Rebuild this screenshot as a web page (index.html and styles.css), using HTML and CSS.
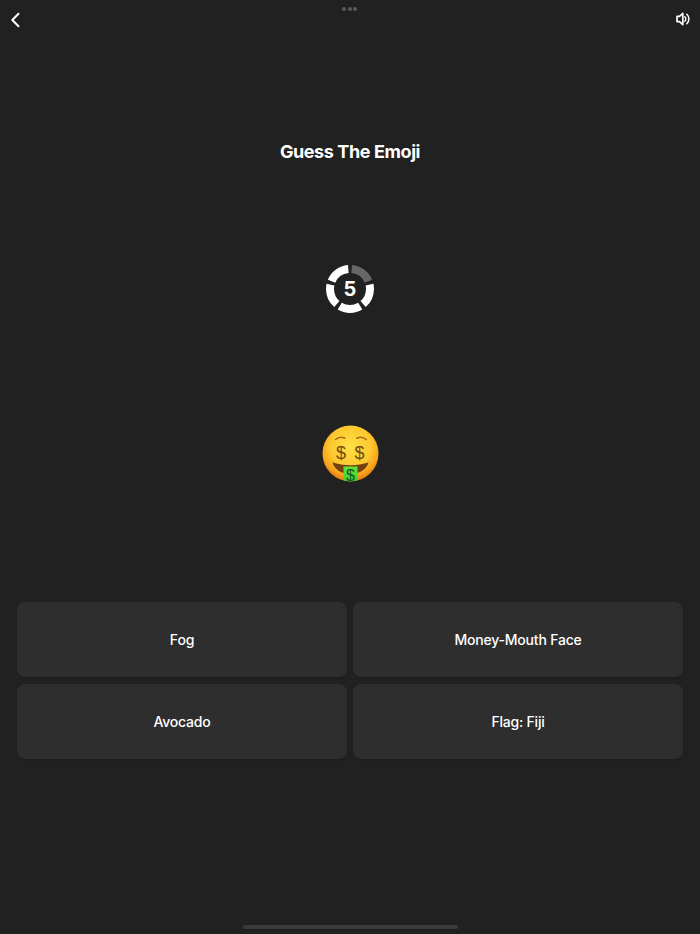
FILE: index.html
```html
<!DOCTYPE html>
<html lang="en">
<head>
<meta charset="utf-8">
<title>Guess The Emoji</title>
<link rel="stylesheet" href="styles.css">
</head>
<body>
<main class="screen">
  <header class="topbar">
    <svg class="icon" width="14" height="16" viewBox="0 0 14 16"><path class="chevron" d="M9.500 1.700 3.300 8l6.200 6.300"/></svg>
    <div class="dots"><span></span><span></span><span></span></div>
    <svg class="icon" width="14" height="14" viewBox="0 0 14 14">
      <path class="speaker" d="M6.800 1.400v11.200L3.500 9.600H1V4.400h2.500z"/>
      <path class="wave" d="M8.800 4.700a3.200 3.200 0 0 1 0 4.600"/>
      <path class="wave" d="M10.800 2.300a6.300 6.300 0 0 1 0 9.400"/>
    </svg>
  </header>
  <h1 class="title">Guess The Emoji</h1>
  <div class="timer">
    <svg class="ring" width="48" height="48" viewBox="0 0 48 48">
      <g class="ring-group">
        <circle class="seg seg-spent" cx="24" cy="24" r="20" pathLength="100" stroke-dasharray="17.200 82.800" stroke-dashoffset="-1.400"/>
        <circle class="seg" cx="24" cy="24" r="20" pathLength="100" stroke-dasharray="17.200 82.800" stroke-dashoffset="-21.400"/>
        <circle class="seg" cx="24" cy="24" r="20" pathLength="100" stroke-dasharray="17.200 82.800" stroke-dashoffset="-41.400"/>
        <circle class="seg" cx="24" cy="24" r="20" pathLength="100" stroke-dasharray="17.200 82.800" stroke-dashoffset="-61.400"/>
        <circle class="seg" cx="24" cy="24" r="20" pathLength="100" stroke-dasharray="17.200 82.800" stroke-dashoffset="-81.400"/>
      </g>
    </svg>
    <span class="count">5</span>
  </div>
  <svg class="emoji" width="80" height="80" viewBox="0 0 80 80" role="img" aria-label="Money-mouth face">
    <defs>
      <radialGradient id="face" cx="50%" cy="38%" r="58%">
        <stop offset="0" stop-color="#ffdf45"/>
        <stop offset=".62" stop-color="#fdc92f"/>
        <stop offset=".88" stop-color="#f7a51d"/>
        <stop offset="1" stop-color="#ea8713"/>
      </radialGradient>
      <linearGradient id="bill" x1="0" y1="0" x2="0" y2="1">
        <stop offset="0" stop-color="#5fe43a"/>
        <stop offset="1" stop-color="#3ccf2c"/>
      </linearGradient>
      <clipPath id="faceclip"><circle cx="40.500" cy="38.500" r="28"/></clipPath>
    </defs>
    <circle cx="40.500" cy="38.500" r="28" fill="url(#face)"/>
    <path class="brow" d="M25.500 24.500c2.800-2.400 6.300-2.900 9.400-1.300"/>
    <path class="brow" d="M46.800 23.200c3.100-1.600 6.600-1.100 9.400 1.300"/>
    <text class="eye" x="31" y="43.500">$</text>
    <text class="eye" x="49.500" y="43.500">$</text>
    <path class="mouth" d="M22.500 47.600c5.400 1.700 11.500 2.600 18 2.600s12.600-.9 18-2.600c-1.400 6-8.200 11.400-18 11.400s-16.600-5.400-18-11.400z"/>
    <g clip-path="url(#faceclip)">
      <rect x="33.500" y="51.500" width="14" height="17" fill="url(#bill)"/>
      <text class="bill-sign" x="40.500" y="65.500">$</text>
    </g>
  </svg>
  <section class="answers">
    <button class="answer">Fog</button>
    <button class="answer">Money-Mouth Face</button>
    <button class="answer">Avocado</button>
    <button class="answer">Flag: Fiji</button>
  </section>
  <div class="home-indicator"></div>
</main>
</body>
</html>
```
FILE: styles.css
```css
* { box-sizing: border-box; }
html, body { margin: 0; height: 100%; }
body {
  background: #212121;
  color: #fff;
  font-family: Inter, "Liberation Sans", sans-serif;
  overflow: hidden;
}
.screen {
  height: 934px;
  display: flex;
  flex-direction: column;
  align-items: center;
}
.topbar {
  width: 100%;
  height: 38px;
  padding: 12px 10px 0 9px;
  display: flex;
  justify-content: space-between;
  align-items: flex-start;
}
.icon { display: block; }
.chevron, .wave {
  fill: none;
  stroke: #fff;
  stroke-linecap: round;
  stroke-linejoin: round;
}
.chevron { stroke-width: 2; }
.wave { stroke-width: 1.500; }
.speaker { fill: none; stroke: #fff; stroke-width: 1.700; stroke-linejoin: round; }
.dots {
  display: flex;
  gap: 1.500px;
  margin-top: -5px;
}
.dots span {
  width: 4px;
  height: 4px;
  border-radius: 50%;
  background: #5a5a5a;
}
.title {
  margin: 100px 0 0;
  height: 28px;
  font-size: 18px;
  line-height: 28px;
  font-weight: 700;
  letter-spacing: -.4px;
}
.timer {
  margin-top: 99px;
  width: 48px;
  height: 48px;
  display: grid;
  place-items: center;
}
.ring, .count { grid-area: 1 / 1; }
.ring-group { transform: rotate(-90deg); transform-origin: 24px 24px; }
.seg { fill: none; stroke: #fff; stroke-width: 8; }
.seg-spent { stroke: #666; }
.count { font-size: 20px; line-height: 1; font-weight: 700; }
.emoji { margin-top: 102px; display: block; flex: none; }
.brow { fill: none; stroke: #a8691a; stroke-width: 1.600; stroke-linecap: round; }
.eye {
  font-family: "Liberation Sans", sans-serif;
  font-size: 18px;
  text-anchor: middle;
  fill: #6f4a16;
}
.mouth { fill: #73400f; }
.bill-sign {
  font-family: "Liberation Sans", sans-serif;
  font-size: 16px;
  text-anchor: middle;
  fill: #14552a;
}
.answers {
  margin-top: 107px;
  width: 100%;
  padding: 0 17px;
  display: grid;
  grid-template-columns: 1fr 1fr;
  grid-auto-rows: 75px;
  gap: 7px 6px;
}
.answer {
  border: 0;
  border-radius: 8px;
  background: #2e2e2e;
  box-shadow: 0 1px 2px rgba(0, 0, 0, .15);
  color: #fff;
  font: 500 14px Inter, "Liberation Sans", sans-serif;
  letter-spacing: -.2px;
}
.home-indicator {
  margin-top: auto;
  margin-bottom: 5px;
  width: 215px;
  height: 4px;
  border-radius: 2px;
  background: #3a3a3a;
}
```
